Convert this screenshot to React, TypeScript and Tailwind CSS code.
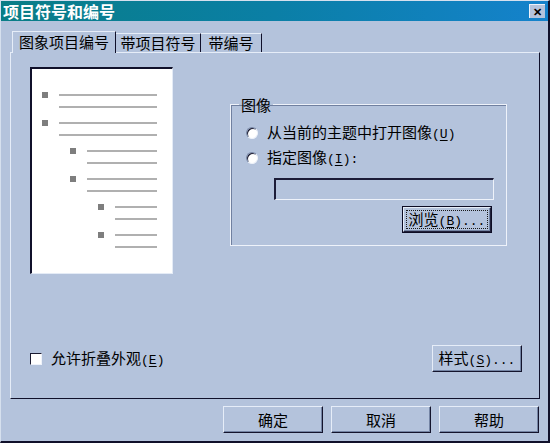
import React from "react";

const FONT = {
  fontFamily: '"Noto Sans CJK SC", "Liberation Sans", sans-serif',
};

// "(X)" accelerator suffix, half-width like the system dialog font
function Key({ k, tail = "" }: { k: string; tail?: string }) {
  return (
    <span className="font-['Liberation_Mono',monospace] text-[13px]">
      (<span className="underline underline-offset-2">{k}</span>){tail}
    </span>
  );
}

function Button({
  label,
  hotkey,
  tail = "",
  className = "",
  isDefault = false,
}: {
  label: string;
  hotkey?: string;
  tail?: string;
  className?: string;
  isDefault?: boolean;
}) {
  const text = (
    <span className="leading-none">
      {label}
      {hotkey && <Key k={hotkey} tail={tail} />}
    </span>
  );
  if (isDefault) {
    return (
      <div className={`border border-[#0c0c24] ${className}`}>
        <div className="flex h-full items-center justify-center border-t border-l border-[#e6edf8] border-r-[#20203a] border-b-[#20203a] border-r border-b shadow-[inset_-1px_-1px_0_#7484a4]">
          <div className="flex items-center justify-center border border-dotted border-[#1a1a1a] px-[2px]">
            {text}
          </div>
        </div>
      </div>
    );
  }
  return (
    <div
      className={`flex items-center justify-center border-t border-l border-t-[#e6edf8] border-l-[#e6edf8] border-r border-b border-r-[#14142c] border-b-[#14142c] shadow-[inset_-1px_-1px_0_#7484a4] ${className}`}
    >
      {text}
    </div>
  );
}

function Radio() {
  return (
    <span className="inline-block h-[12px] w-[12px] rounded-full border border-t-[#7484a4] border-l-[#7484a4] border-r-[#eef2fa] border-b-[#eef2fa] bg-white shadow-[inset_1px_1px_0_#1a1a30]" />
  );
}

// preview page: three nesting levels, two bullets each, two lines per bullet
const LEVELS = [0, 0, 1, 1, 2, 2];

function Preview() {
  return (
    <div className="flex h-[207px] w-[143px] flex-col border-t-2 border-l-2 border-t-[#10102a] border-l-[#10102a] border-r border-b border-r-[#e4ebf6] border-b-[#e4ebf6] bg-white pt-[21px]">
      {LEVELS.map((lvl, i) => (
        <div key={i} className="flex h-[28px]" style={{ paddingLeft: 10 + lvl * 28 }}>
          <span className="mt-[2px] h-[6px] w-[6px] bg-[#7e7e7e]" />
          <div className="ml-[11px] flex flex-1 flex-col gap-[10px] pr-[15px] pt-[4px]">
            <span className="h-[2px] bg-[#b0b0b0]" />
            <span className="h-[2px] bg-[#b0b0b0]" />
          </div>
        </div>
      ))}
    </div>
  );
}

export default function App() {
  return (
    <div
      className="relative flex h-[443px] w-[550px] flex-col border-t border-l border-[#d6e0ee] border-r-[#10102a] border-b-[#10102a] border-r-2 border-b-2 bg-[#b4c3dc] text-[15px] text-black"
      style={FONT}
    >
      {/* title bar */}
      <div className="flex h-[20px] items-center justify-between bg-gradient-to-r from-[#0a7d86] via-[#0b7fa6] to-[#1582cc] pl-[2px] pr-[3px]">
        <span className="text-[16px] font-bold leading-none text-white">项目符号和编号</span>
        <span className="flex h-[14px] w-[16px] items-center justify-center border-t border-l border-[#eef2fa] border-r-[#10102a] border-b-[#10102a] bg-[#b4c3dc] text-[11px] font-bold leading-none text-black">
          ✕
        </span>
      </div>

      {/* tabs */}
      <div className="mt-[10px] flex h-[21px] items-end pl-[11px]">
        <div className="relative z-10 -mb-px flex h-[22px] w-[104px] items-center justify-center border-t border-l border-[#e6edf8] border-r border-r-[#10102a] bg-[#b4c3dc]">
          图象项目编号
        </div>
        <div className="flex h-[19px] w-[85px] items-center justify-center border-t border-[#e6edf8] border-r border-r-[#10102a]">
          带项目符号
        </div>
        <div className="flex h-[19px] w-[61px] items-center justify-center border-t border-[#e6edf8] border-r border-r-[#10102a]">
          带编号
        </div>
      </div>

      {/* tab panel */}
      <div className="ml-[9px] flex h-[347px] w-[530px] flex-col border-t border-l border-[#e6edf8] border-r border-b border-r-[#10102a] border-b-[#10102a] pl-[19px] pt-[14px]">
        <div className="flex">
          <Preview />
          <fieldset className="ml-[57px] mt-[30px] h-[149px] w-[277px] border border-[#eef2fa] px-0 pb-0 pt-0 shadow-[inset_1px_1px_0_#7080a0]">
            <legend className="ml-[8px] px-[2px] leading-none">图像</legend>
            <div className="flex items-center gap-[9px] pl-[15px] pt-[12px] leading-none">
              <Radio />
              <span>
                从当前的主题中打开图像<Key k="U" />
              </span>
            </div>
            <div className="mt-[8px] flex items-center gap-[9px] pl-[15px] leading-none">
              <Radio />
              <span>
                指定图像<Key k="I" tail=":" />
              </span>
            </div>
            <div className="ml-[43px] mt-[12px] h-[22px] w-[220px] border-t-2 border-l-2 border-t-[#1c1c38] border-l-[#1c1c38] border-r border-b border-r-[#eef2fa] border-b-[#eef2fa]" />
            <div className="mt-[6px] flex justify-end pr-[14px]">
              <Button label="浏览" hotkey="B" tail="..." isDefault className="h-[27px] w-[90px]" />
            </div>
          </fieldset>
        </div>

        <div className="mb-[26px] mt-auto flex items-center justify-between pr-[17px]">
          <div className="flex items-center gap-[9px] leading-none">
            <span className="h-[12px] w-[12px] border border-t-[#1a1a30] border-l-[#1a1a30] border-r-[#eef2fa] border-b-[#eef2fa] bg-white" />
            <span>
              允许折叠外观<Key k="E" />
            </span>
          </div>
          <Button label="样式" hotkey="S" tail="..." className="h-[27px] w-[90px]" />
        </div>
      </div>

      {/* dialog buttons */}
      <div className="mt-[7px] flex justify-end gap-[8px] pr-[9px]">
        <Button label="确定" className="h-[27px] w-[100px]" />
        <Button label="取消" className="h-[27px] w-[100px]" />
        <Button label="帮助" className="h-[27px] w-[100px]" />
      </div>
    </div>
  );
}
